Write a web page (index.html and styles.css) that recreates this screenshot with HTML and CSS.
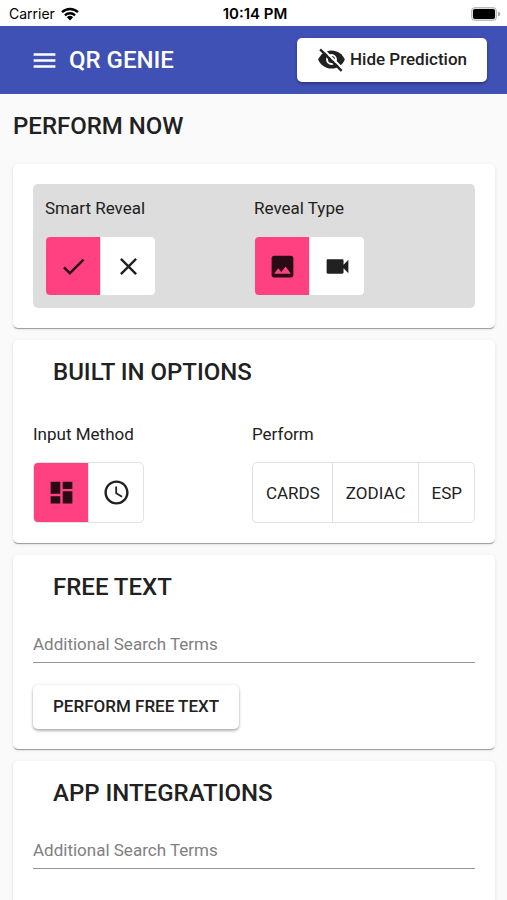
FILE: index.html
```html
<!DOCTYPE html>
<html lang="en">
<head>
<meta charset="utf-8">
<meta name="viewport" content="width=device-width, initial-scale=1">
<title>QR Genie</title>
<link rel="stylesheet" href="styles.css">
</head>
<body>
<div class="status">
  <div class="status-left">
    <span>Carrier</span>
    <svg class="wifi" viewBox="0 0 18 14" aria-hidden="true"><path d="M1 5.2a11.6 11.6 0 0 1 16 0M3.900 8.300a7.400 7.400 0 0 1 10.200 0" fill="none" stroke="#000" stroke-width="2.300"/><path d="M5.900 10.300a4.500 4.500 0 0 1 6.200 0L9 13.500z"/></svg>
  </div>
  <span class="time">10:14 PM</span>
  <div class="status-right">
    <svg class="battery" viewBox="0 0 30 14" aria-hidden="true"><rect x=".5" y=".5" width="25" height="13" rx="3.500" fill="#ddd" stroke="#bbb"/><rect x="2" y="2" width="22" height="10" rx="2"/><path d="M27 4.500c3 .8 3 4.200 0 5z" fill="#aaa"/></svg>
  </div>
</div>
<header class="toolbar">
  <button class="menu" type="button" aria-label="Menu"><svg class="icon" viewBox="0 0 24 24"><path d="M3 18h18v-2H3v2zm0-5h18v-2H3v2zm0-7v2h18V6H3z"/></svg></button>
  <span class="brand">QR GENIE</span>
  <button class="raised hide" type="button"><svg class="icon" viewBox="0 0 24 24" aria-hidden="true"><path d="M12 4.500C7 4.500 2.730 7.610 1 12c1.730 4.390 6 7.500 11 7.500s9.270-3.110 11-7.500c-1.730-4.390-6-7.500-11-7.500z"/><circle cx="12" cy="12" r="3.700" fill="none" stroke="#fff" stroke-width="1.600"/><circle cx="12.300" cy="11.700" r="1.200" fill="#fff"/><path d="M4 2.300L22.400 20.700" stroke="#fff" stroke-width="1.800"/><path d="M2.600 3.600L20.400 21.400" stroke="currentColor" stroke-width="1.900"/></svg><span>Hide Prediction</span></button>
</header>
<main class="page">
  <h1 class="heading">PERFORM NOW</h1>

  <section class="card">
    <div class="panel">
      <div class="field" role="group" aria-labelledby="smart">
        <div class="label" id="smart">Smart Reveal</div>
        <div class="toggles plain">
          <button class="toggle on" type="button" aria-pressed="true" aria-label="On"><svg class="icon" viewBox="0 0 24 24"><path d="M9 16.170L4.830 12l-1.420 1.410L9 19 21 7l-1.410-1.410z"/></svg></button>
          <button class="toggle" type="button" aria-pressed="false" aria-label="Off"><svg class="icon" viewBox="0 0 24 24"><path d="M19 6.410L17.590 5 12 10.590 6.410 5 5 6.410 10.590 12 5 17.590 6.410 19 12 13.410 17.590 19 19 17.590 13.410 12z"/></svg></button>
        </div>
      </div>
      <div class="field" role="group" aria-labelledby="type">
        <div class="label" id="type">Reveal Type</div>
        <div class="toggles plain">
          <button class="toggle on" type="button" aria-pressed="true" aria-label="Image"><svg class="icon" viewBox="0 0 24 24"><path d="M21 19V5c0-1.100-.9-2-2-2H5c-1.100 0-2 .9-2 2v14c0 1.100.9 2 2 2h14c1.100 0 2-.9 2-2zM8.500 13.500l2.500 3.010L14.500 12l4.500 6H5l3.500-4.500z"/></svg></button>
          <button class="toggle" type="button" aria-pressed="false" aria-label="Video"><svg class="icon" viewBox="0 0 24 24"><path d="M17 10.500V7c0-.55-.45-1-1-1H4c-.55 0-1 .45-1 1v10c0 .55.45 1 1 1h12c.55 0 1-.45 1-1v-3.500l4 4v-11l-4 4z"/></svg></button>
        </div>
      </div>
    </div>
  </section>

  <section class="card">
    <h2 class="heading title">BUILT IN OPTIONS</h2>
    <div class="options">
      <div class="field" role="group" aria-labelledby="method">
        <div class="label" id="method">Input Method</div>
        <div class="toggles">
          <button class="toggle on" type="button" aria-pressed="true" aria-label="Grid"><svg class="icon" viewBox="0 0 24 24"><path d="M3 13h8V3H3v10zm0 8h8v-6H3v6zm10 0h8V11h-8v10zm0-18v6h8V3h-8z"/></svg></button>
          <button class="toggle" type="button" aria-pressed="false" aria-label="Clock"><svg class="icon" viewBox="0 0 24 24"><path d="M11.990 2C6.470 2 2 6.480 2 12s4.470 10 9.990 10C17.520 22 22 17.520 22 12S17.520 2 11.990 2zM12 20c-4.420 0-8-3.580-8-8s3.580-8 8-8 8 3.580 8 8-3.580 8-8 8zm.5-13H11v6l5.250 3.150.75-1.230-4.500-2.670z"/></svg></button>
        </div>
      </div>
      <div class="field" role="group" aria-labelledby="perform">
        <div class="label" id="perform">Perform</div>
        <div class="toggles">
          <button class="toggle" type="button">CARDS</button>
          <button class="toggle" type="button">ZODIAC</button>
          <button class="toggle" type="button">ESP</button>
        </div>
      </div>
    </div>
  </section>

  <section class="card search">
    <h2 class="heading title">FREE TEXT</h2>
    <input class="input" type="text" placeholder="Additional Search Terms" aria-label="Additional Search Terms">
    <button class="raised" type="button">PERFORM FREE TEXT</button>
  </section>

  <section class="card search">
    <h2 class="heading title">APP INTEGRATIONS</h2>
    <input class="input" type="text" placeholder="Additional Search Terms" aria-label="Additional Search Terms">
  </section>
</main>
</body>
</html>
```

FILE: styles.css
```css
* {
  box-sizing: border-box;
}

body {
  margin: 0;
  height: 100vh;
  display: flex;
  flex-direction: column;
  overflow: hidden;
  background: #fafafa;
  color: #212121;
  font-family: Roboto, sans-serif;
  font-size: 17px;
  line-height: 24px;
}

button {
  margin: 0;
  border: 0;
  color: inherit;
  font: inherit;
}

.icon {
  display: block;
  width: 29px;
  height: 29px;
  fill: currentColor;
}

.status {
  flex: none;
  display: grid;
  grid-template-columns: 1fr auto 1fr;
  align-items: center;
  height: 26px;
  padding: 2px 6px 0 9px;
  background: #fff;
  color: #000;
  font-family: Inter, sans-serif;
  font-size: 14px;
}

.status-left,
.status-right {
  display: flex;
  align-items: center;
  gap: 6px;
}

.status-right {
  justify-content: flex-end;
}

.time {
  font-size: 15px;
  font-weight: 600;
}

.wifi {
  width: 18px;
  height: 14px;
}

.battery {
  width: 30px;
  height: 14px;
}

.toolbar {
  flex: none;
  display: flex;
  align-items: center;
  height: 68px;
  padding: 0 20px 0 30px;
  background: #3f51b5;
  color: #fff;
}

.menu {
  padding: 0;
  background: none;
}

.brand {
  margin-left: 10px;
  font-size: 24px;
  font-weight: 500;
}

.raised {
  display: inline-flex;
  align-items: center;
  height: 44px;
  padding: 0 20px 2px;
  border-radius: 5px;
  background: #fff;
  color: #212121;
  font-weight: 500;
  box-shadow: 0 2px 3px rgba(0, 0, 0, .28), 0 0 3px rgba(0, 0, 0, .12);
}

.hide {
  gap: 4px;
  margin-left: auto;
}

.page {
  flex: 1;
  min-height: 0;
  overflow: hidden;
  padding: 16px 12px 0 13px;
}

.heading {
  margin: 0;
  font-size: 24px;
  font-weight: 500;
  line-height: 32px;
}

.title {
  padding-left: 20px;
  margin-bottom: 34px;
}

.search .title {
  margin-bottom: 26px;
}

.card {
  margin-top: 12px;
  padding: 16px 20px 20px;
  border-radius: 5px;
  background: #fff;
  box-shadow: 0 2px 1px -1px rgba(0, 0, 0, .25), 0 1px 1px rgba(0, 0, 0, .14), 0 1px 4px rgba(0, 0, 0, .08);
}

.heading + .card {
  margin-top: 22px;
  padding-top: 20px;
}

.card:last-child {
  padding-bottom: 64px;
}

.panel {
  display: grid;
  grid-template-columns: 1fr 1fr;
  padding: 12px;
  border-radius: 5px;
  background: #ddd;
}

.options {
  display: flex;
  justify-content: space-between;
}

.label {
  margin-bottom: 16px;
}

.toggles {
  display: inline-flex;
  vertical-align: top;
  height: 61px;
  border: 1px solid #e2e2e2;
  border-radius: 5px;
  background: #fff;
  overflow: hidden;
}

.plain {
  height: 60px;
  border-color: #ddd;
}

.toggle {
  display: flex;
  align-items: center;
  padding: 0 12px 0 13px;
  background: none;
}

.toggle + .toggle {
  border-left: 1px solid #e2e2e2;
}

.toggle.on {
  background: #ff4081;
  color: #290a15;
}

.input {
  display: block;
  width: 100%;
  height: 34px;
  margin-bottom: 22px;
  padding: 0 0 4px;
  border: 0;
  border-bottom: 1px solid #949494;
  border-radius: 0;
  background: none;
  color: inherit;
  font: inherit;
}

.input::placeholder {
  color: #808080;
  opacity: 1;
}
```
